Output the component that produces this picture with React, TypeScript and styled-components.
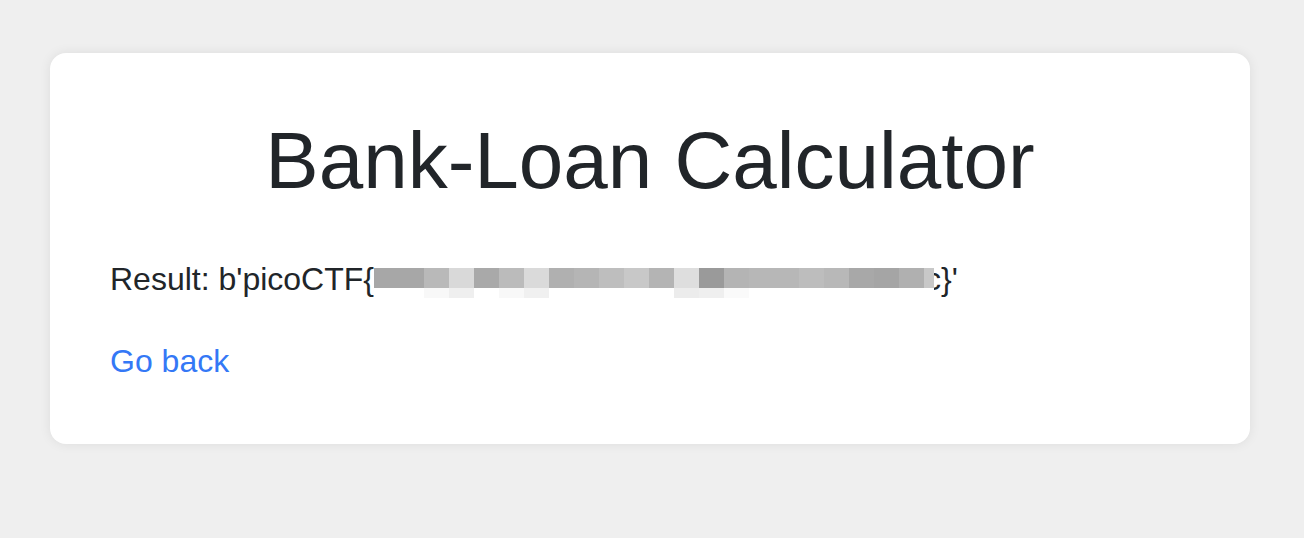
import React from 'react'
import styled, { createGlobalStyle } from 'styled-components'

const GlobalStyle = createGlobalStyle`
  html, body {
    margin: 0;
    padding: 0;
    background: #efefef;
    font-family: 'Liberation Sans', Arial, Helvetica, sans-serif;
    color: #212529;
  }
`

// pixelated redaction over the flag, one entry per 25px column
const mainRow = [
  '#a7a7a7', '#a7a7a7', '#b9b9b9', '#d9d9d9', '#a9a9a9', '#bbbbbb', '#dadada', '#b0b0b0',
  '#b5b5b5', '#bebebe', '#c8c8c8', '#b4b4b4', '#dedede', '#9a9a9a', '#b4b4b4', '#b7b7b7',
  '#b7b7b7', '#bdbdbd', '#b8b8b8', '#a8a8a8', '#a5a5a5', '#b0b0b0', '#c8c8c8',
]
const lowRow = [
  '#fff', '#fff', '#f8f8f8', '#efefef', '#fff', '#f8f8f8', '#f0f0f0', '#fff',
  '#fff', '#fff', '#fff', '#fff', '#ececec', '#efefef', '#fafafa', '#fff',
  '#fff', '#fff', '#fff', '#fff', '#fff', '#fff', '#fff',
]

export default function App() {
  return (
    <>
      <GlobalStyle />
      <Page>
        <Card>
          <Title>Bank-Loan Calculator</Title>
          <Result>
            {"Result: b'picoCTF{"}
            <Redaction aria-label="redacted">
              <BlurRow $height={20}>
                {mainRow.map((c, i) => (
                  <Cell key={i} $color={c} $last={i === mainRow.length - 1} />
                ))}
              </BlurRow>
              <BlurRow $height={10}>
                {lowRow.map((c, i) => (
                  <Cell key={i} $color={c} $last={i === lowRow.length - 1} />
                ))}
              </BlurRow>
            </Redaction>
            {"c}'"}
          </Result>
          <BackLink href="#">Go back</BackLink>
        </Card>
      </Page>
    </>
  )
}

const Page = styled.div`
  padding: 53px 54px 93px 50px;
`

const Card = styled.div`
  background: #fff;
  border-radius: 16px;
  box-shadow: 0 0 12px rgba(0, 0, 0, 0.08);
  padding: 60px 60px 59px;
`

const Title = styled.h1`
  margin: 0 0 46px;
  text-align: center;
  font-size: 80px;
  font-weight: 400;
  line-height: 1.2;
  color: #212529;
`

const Result = styled.p`
  margin: 0 0 34px;
  font-size: 32px;
  line-height: 48px;
  white-space: nowrap;
`

const Redaction = styled.span`
  position: relative;
  z-index: 1;
  display: inline-flex;
  flex-direction: column;
  vertical-align: top;
  width: 560px;
  height: 48px;
  padding-top: 13px;
  box-sizing: border-box;
  margin-right: -9px;
`

const BlurRow = styled.span<{ $height: number }>`
  display: flex;
  height: ${({ $height }) => $height}px;
`

const Cell = styled.span<{ $color: string; $last?: boolean }>`
  flex: 0 0 ${({ $last }) => ($last ? 10 : 25)}px;
  background: ${({ $color }) => $color};
`

const BackLink = styled.a`
  display: block;
  font-size: 32px;
  line-height: 48px;
  color: #3478f6;
  text-decoration: none;
`
